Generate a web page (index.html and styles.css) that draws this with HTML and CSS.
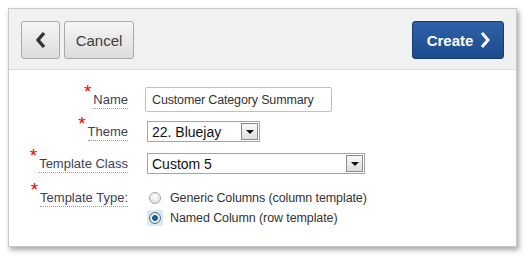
FILE: index.html
```html
<!DOCTYPE html>
<html>
<head>
<meta charset="utf-8">
<link rel="stylesheet" href="styles.css">
</head>
<body>
<div class="card">
  <div class="header">
    <div class="left-btns">
      <button class="btn btn-icon" aria-label="Back">
        <svg width="14" height="18" viewBox="0 0 14 18"><path d="M10 2 L4 9 L10 16" fill="none" stroke="#333" stroke-width="3.4" stroke-linejoin="miter"/></svg>
      </button>
      <button class="btn btn-cancel">Cancel</button>
    </div>
    <button class="btn btn-create">Create
      <svg width="12" height="18" viewBox="0 0 12 18"><path d="M3 2 L9 9 L3 16" fill="none" stroke="#fff" stroke-width="3" stroke-linejoin="miter"/></svg>
    </button>
  </div>
  <div class="form">
    <div class="row row-name">
      <div class="label"><span class="req">*</span><span class="ltext">Name</span></div>
      <div class="field"><div class="input">Customer Category Summary</div></div>
    </div>
    <div class="row row-theme">
      <div class="label"><span class="req">*</span><span class="ltext">Theme</span></div>
      <div class="field"><div class="select sel-theme"><span>22. Bluejay</span><span class="arrow"></span></div></div>
    </div>
    <div class="row row-class">
      <div class="label"><span class="req">*</span><span class="ltext">Template Class</span></div>
      <div class="field"><div class="select sel-class"><span>Custom 5</span><span class="arrow"></span></div></div>
    </div>
    <div class="row row-type">
      <div class="label"><span class="req">*</span><span class="ltext">Template Type:</span></div>
      <div class="field radios">
        <div class="radio-line"><span class="radio-wrap"><span class="radio"></span></span><span>Generic Columns (column template)</span></div>
        <div class="radio-line"><span class="radio-wrap focus"><span class="radio checked"></span></span><span>Named Column (row template)</span></div>
      </div>
    </div>
  </div>
</div>
</body>
</html>
```

FILE: styles.css
```css
* { box-sizing: border-box; }
html, body { margin: 0; padding: 0; background: #fff; }
body { padding: 8px; font-family: "Liberation Sans", Arial, sans-serif; font-size: 13px; color: #333; }

.card {
  width: 509px;
  height: 239px;
  border: 1px solid #c8c8c8;
  background: #fff;
  box-shadow: 2px 3px 5px rgba(0,0,0,0.35);
}

.header {
  height: 61px;
  background: #f1f1f1;
  border-bottom: 1px solid #dcdcdc;
  display: flex;
  justify-content: space-between;
  align-items: flex-start;
  padding: 12px 12px 0 12px;
}
.left-btns { display: flex; gap: 4px; }

.btn {
  height: 38px;
  border-radius: 3px;
  font-family: "Liberation Sans", Arial, sans-serif;
  padding: 0;
  display: flex;
  align-items: center;
  justify-content: center;
  cursor: pointer;
}
.btn-icon, .btn-cancel {
  border: 1px solid #a9a9a9;
  background: linear-gradient(#f6f6f6, #dcdcdc);
  color: #404040;
  font-size: 15px;
}
.btn-icon { width: 39px; }
.btn-cancel { width: 70px; }
.btn-create {
  width: 92px;
  border: 1px solid #173c73;
  background: linear-gradient(#2f61a8, #1d4a8d);
  color: #fff;
  font-size: 15px;
  font-weight: bold;
  gap: 6px;
  padding-left: 2px;
}

.form { padding-top: 17px; }
.row { display: flex; align-items: flex-start; }
.label {
  width: 119px;
  text-align: right;
  color: #404055;
  white-space: nowrap;
}
.ltext { border-bottom: 1px dotted #999; padding-bottom: 1px; }
.req {
  color: #e00;
  font-size: 19px;
  position: relative;
  top: -6px;
  margin-right: 2px;
  line-height: 0;
}
.field { margin-left: 17px; }

.row-name { height: 25px; }
.row-name .label { padding-top: 5px; }
.input {
  width: 187px;
  height: 25px;
  border: 1px solid #c0c0c0;
  border-radius: 2px;
  padding: 5px 0 0 6px;
  color: #333;
  background: #fff;
  font-size: 12.5px;
  letter-spacing: -0.15px;
}

.row-theme { margin-top: 9px; height: 21px; }
.row-theme .label { padding-top: 3px; }
.row-class { margin-top: 11px; height: 21px; }
.row-class .label { padding-top: 3px; }

.select {
  margin-left: 2px;
  height: 21px;
  border: 1px solid #a5a5a5;
  background: #fff;
  display: flex;
  align-items: center;
  justify-content: space-between;
  padding-left: 4px;
  padding-right: 1px;
  color: #111;
  font-size: 14px;
}
.sel-theme { width: 113px; }
.sel-class { width: 218px; }
.arrow {
  width: 17px;
  height: 17px;
  border: 1px solid #8a8a8a;
  background: linear-gradient(#fafafa, #dedede);
  position: relative;
}
.arrow::after {
  content: "";
  position: absolute;
  left: 4px;
  top: 6px;
  border-left: 4px solid transparent;
  border-right: 4px solid transparent;
  border-top: 4px solid #111;
}

.row-type { margin-top: 15px; }
.row-type .label { padding-top: 1px; }
.radios { margin-left: 19px; display: flex; flex-direction: column; gap: 3px; }
.radio-line { display: flex; align-items: center; gap: 7px; height: 17px; color: #333; font-size: 12.5px; letter-spacing: -0.1px; }
.radio-wrap {
  display: inline-flex;
  width: 16px;
  height: 16px;
  align-items: center;
  justify-content: center;
  border-radius: 2px;
}
.radio-wrap.focus { background: #dde8f5; }
.radio {
  display: inline-block;
  width: 12px;
  height: 12px;
  border-radius: 50%;
  border: 1px solid #a8a8a8;
  background: radial-gradient(circle at 50% 35%, #fff, #d8d8d8);
}
.radio.checked {
  border-color: #5a6b7c;
  background: radial-gradient(circle, #1a6fb3 0, #0d4f8a 2.5px, #f0f4f8 3.2px, #c8d0d8 100%);
}
```
